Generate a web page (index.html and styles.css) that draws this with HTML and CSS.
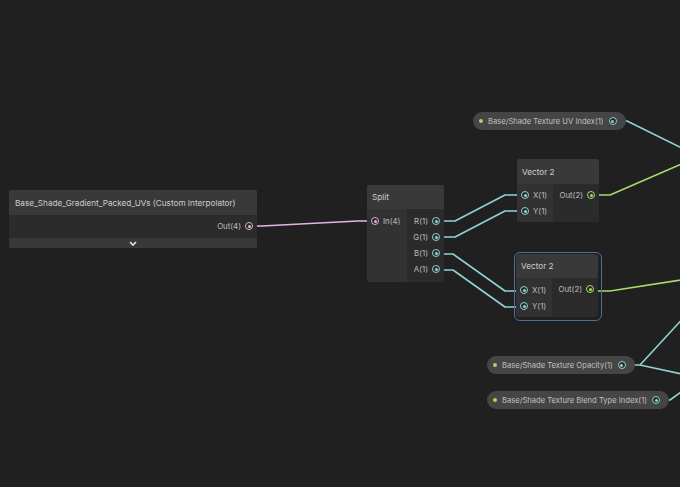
FILE: index.html
```html
<!DOCTYPE html>
<html lang="en">
<head>
  <meta charset="UTF-8" />
  <title>Shader Graph</title>
  <link rel="stylesheet" href="styles.css">
</head>
<body>
  <div class="graph">
    <svg class="wires" width="680" height="487" viewBox="0 0 680 487">
      <polyline class="w-pink" points="253,226 262,226 358,221 371,221" />
      <polyline class="w-cyan" points="440,221 455,221 505,195 521,195" />
      <polyline class="w-cyan" points="440,237 455,237 505,211 521,211" />
      <polyline class="w-cyan" points="440,254 453,254 505,291 521,291" />
      <polyline class="w-cyan" points="440,270 453,270 505,307 521,307" />
      <polyline class="w-green" points="594,195 610,195 700,156" />
      <polyline class="w-green" points="594,291 610,291 700,277" />
      <polyline class="w-cyan" points="615,121 627,121 700,157" />
      <polyline class="w-cyan" points="625,365 640,365 700,300" />
      <polyline class="w-cyan" points="640,365 700,378" />
      <polyline class="w-cyan" points="659,400 670,400 700,378" />
    </svg>

    <!-- custom interpolator -->
    <div class="node node-interp">
      <div class="node-title">Base_Shade_Gradient_Packed_UVs (Custom Interpolator)</div>
      <div class="node-body">
        <div class="outputs">
          <div class="port out">Out(4) <span class="dot pink"></span></div>
        </div>
      </div>
      <div class="node-foot">
        <svg width="8" height="5" viewBox="0 0 8 5"><polyline points="1,1 4,4 7,1" /></svg>
      </div>
    </div>

    <!-- split -->
    <div class="node node-split">
      <div class="node-title">Split</div>
      <div class="node-body">
        <div class="inputs">
          <div class="port in"><span class="dot pink"></span> In(4)</div>
        </div>
        <div class="outputs">
          <div class="port out">R(1) <span class="dot cyan"></span></div>
          <div class="port out">G(1) <span class="dot cyan"></span></div>
          <div class="port out">B(1) <span class="dot cyan"></span></div>
          <div class="port out">A(1) <span class="dot cyan"></span></div>
        </div>
      </div>
    </div>

    <!-- vector 2 (top) -->
    <div class="node node-vec node-vec-a">
      <div class="node-title">Vector 2</div>
      <div class="node-body">
        <div class="inputs">
          <div class="port in"><span class="dot cyan"></span> X(1)</div>
          <div class="port in"><span class="dot cyan"></span> Y(1)</div>
        </div>
        <div class="outputs">
          <div class="port out">Out(2) <span class="dot green"></span></div>
        </div>
      </div>
    </div>

    <!-- vector 2 (selected) -->
    <div class="selection">
      <div class="node node-vec">
        <div class="node-title">Vector 2</div>
        <div class="node-body">
          <div class="inputs">
            <div class="port in"><span class="dot cyan"></span> X(1)</div>
            <div class="port in"><span class="dot cyan"></span> Y(1)</div>
          </div>
          <div class="outputs">
            <div class="port out">Out(2) <span class="dot green"></span></div>
          </div>
        </div>
      </div>
    </div>

    <!-- properties -->
    <div class="pill pill-uv"><span class="prop-dot"></span>Base/Shade Texture UV Index(1)<span class="dot cyan"></span></div>
    <div class="pill pill-opacity"><span class="prop-dot"></span>Base/Shade Texture Opacity(1)<span class="dot cyan"></span></div>
    <div class="pill pill-blend"><span class="prop-dot"></span>Base/Shade Texture Blend Type Index(1)<span class="dot cyan"></span></div>
  </div>
</body>
</html>
```

FILE: styles.css
```css
body {
  margin: 0;
  background: #202020;
  font-family: 'Inter', 'Noto Sans', sans-serif;
  color: #c4c4c4;
}

.graph {
  position: relative;
  width: 680px;
  height: 487px;
  overflow: hidden;
}

.wires {
  position: absolute;
  left: 0;
  top: 0;
}

.wires polyline {
  fill: none;
  stroke-width: 1.6;
  stroke-linejoin: round;
}

.w-cyan { stroke: #8fd3d5; }
.w-green { stroke: #a6dc6c; }
.w-pink { stroke: #e0b6e0; }

/* nodes */

.node {
  position: absolute;
  background: #2b2b2b;
  border-radius: 2px;
  overflow: hidden;
  font-size: 7.8px;
}

.node-title {
  height: 25px;
  display: flex;
  align-items: center;
  padding-left: 6px;
  background: #393939;
  font-size: 8.2px;
  color: #cccccc;
  white-space: nowrap;
}

.node-body {
  display: flex;
}

.inputs {
  background: #323232;
  padding: 4px 0 3px;
}

.outputs {
  flex: 1;
  padding: 3px 0 4px;
}

.port {
  height: 16px;
  display: flex;
  align-items: center;
  gap: 4px;
  white-space: nowrap;
  color: #bdbdbd;
}

.port.in { padding-left: 4px; }
.port.out { justify-content: flex-end; padding-right: 4px; }

.dot {
  width: 8px;
  height: 8px;
  box-sizing: border-box;
  border-radius: 50%;
  border: 1.5px solid;
  background: #262626;
  display: flex;
  align-items: center;
  justify-content: center;
  flex-shrink: 0;
}

.dot::after {
  content: '';
  width: 3px;
  height: 3px;
  border-radius: 50%;
  background: currentColor;
}

.dot.cyan { color: #8fd3d5; }
.dot.green { color: #a6dc6c; }
.dot.pink { color: #d8b0d8; }

.node-foot {
  height: 10px;
  background: #393939;
  display: flex;
  align-items: center;
  justify-content: center;
}

.node-foot polyline {
  fill: none;
  stroke: #e8e8e8;
  stroke-width: 1.6;
}

.node-interp {
  left: 9px;
  top: 190px;
  width: 248px;
}

.node-split {
  left: 367px;
  top: 185px;
  width: 77px;
}

.node-split .node-title { height: 24px; padding-left: 5px; }
.node-split .inputs { width: 40px; }
.node-split .outputs { padding-top: 4px; padding-bottom: 5px; }

.node-vec {
  width: 82px;
}

.node-vec .node-title { padding-left: 5px; }
.node-vec .inputs { width: 36px; padding-top: 3px; }

.node-vec-a {
  left: 517px;
  top: 159px;
}

.selection {
  position: absolute;
  left: 514px;
  top: 252px;
  width: 84px;
  height: 65px;
  padding: 1px;
  border: 1px solid #4f6e9e;
  border-radius: 6px;
}

.selection .node {
  position: static;
  border-radius: 4px;
}

.selection .node-title { height: 24px; }
.selection .inputs { padding-top: 4px; }

/* property pills */

.pill {
  position: absolute;
  height: 18px;
  box-sizing: border-box;
  padding: 0 10px 0 6px;
  border-radius: 9px;
  background: #454545;
  display: flex;
  align-items: center;
  gap: 5px;
  font-size: 7.6px;
  color: #c0c0c0;
  white-space: nowrap;
}

.pill .dot {
  margin-left: auto;
}

.prop-dot {
  width: 4px;
  height: 4px;
  flex-shrink: 0;
  border-radius: 50%;
  background: #a6d65a;
}

.pill-uv { left: 473px; top: 112px; width: 153px; }
.pill-opacity { left: 487px; top: 356px; width: 148px; }
.pill-blend { left: 487px; top: 391px; width: 182px; }
```
